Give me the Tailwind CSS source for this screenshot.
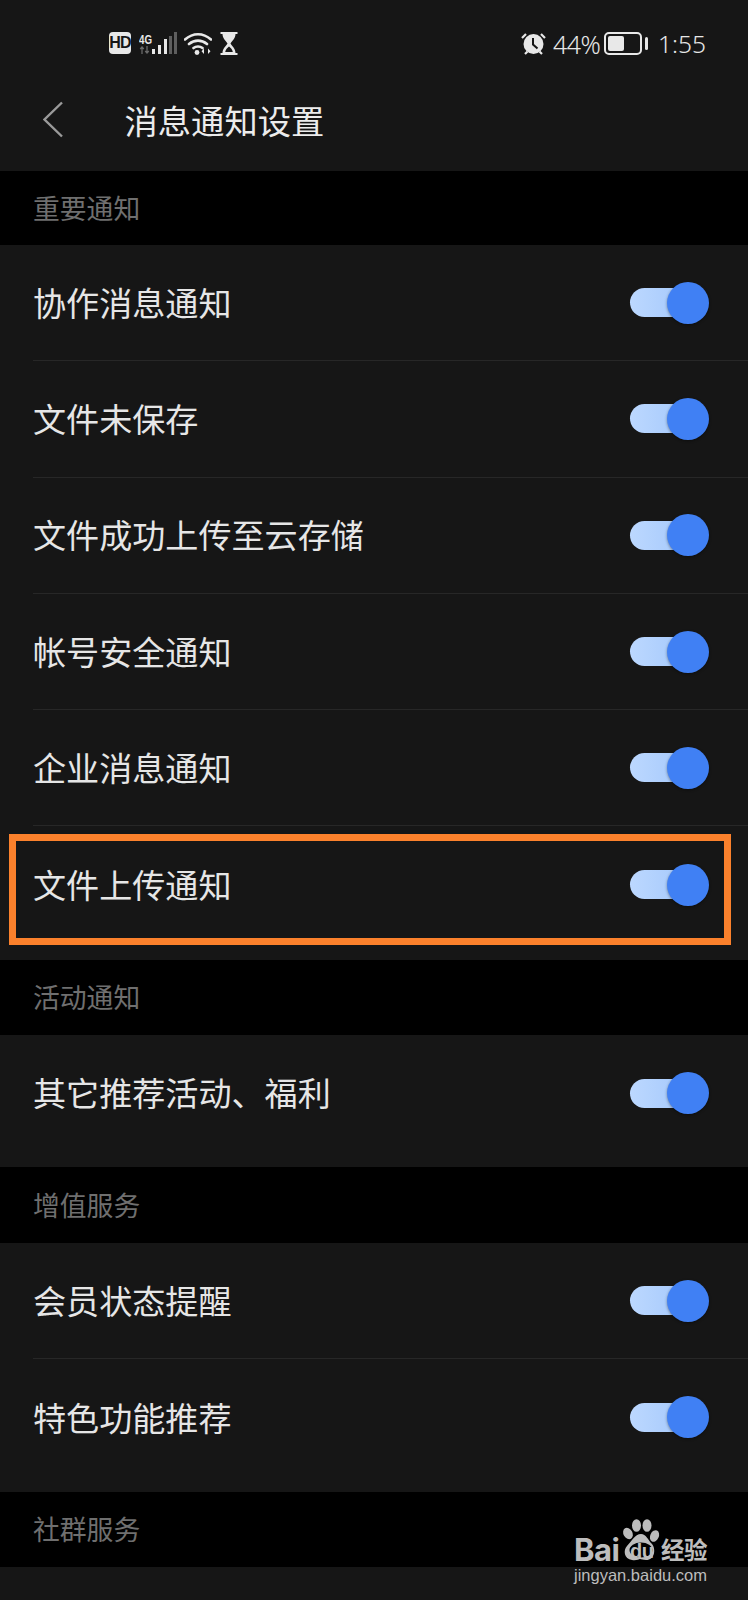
<!DOCTYPE html>
<html lang="zh-CN">
<head>
<meta charset="utf-8">
<title>消息通知设置</title>
<script src="https://cdn.jsdelivr.net/npm/@tailwindcss/browser@4"></script>
</head>
<body class="bg-black">
<div class="relative w-[748px] h-[1600px] overflow-hidden bg-black text-[#e6e6e6] font-['Noto_Sans_CJK_SC','Noto_Sans',sans-serif]">

  <!-- status bar -->
  <div class="h-[86px] bg-[#161616] flex items-start justify-between pt-[32px] pl-[109px] pr-[42px]">
    <div class="flex items-start">
      <div class="w-[22px] h-[22px] rounded-[4px] bg-[#e8e8e8] text-[#161616] flex items-center justify-center text-[16px] font-bold leading-none font-['Liberation_Sans',sans-serif] tracking-[-0.8px]">HD</div>
      <svg class="ml-[8px]" width="38" height="22" viewBox="0 0 38 22">
        <text x="0" y="11.500" font-family="Liberation Sans" font-weight="700" font-size="13.500" fill="#e8e8e8" textLength="13" lengthAdjust="spacingAndGlyphs">4G</text>
        <path d="M3 15v7M1.200 17l1.800-2 1.800 2M8 14v7M6.200 19l1.800 2 1.800-2" stroke="#6a6a6a" stroke-width="1.300" fill="none"/>
        <rect x="13" y="17" width="3" height="5" fill="#e8e8e8"/>
        <rect x="19" y="13" width="3" height="9" fill="#e8e8e8"/>
        <rect x="25" y="7" width="3" height="15" fill="#e8e8e8"/>
        <rect x="30" y="4" width="3" height="18" fill="#5e5e5e"/>
        <rect x="35" y="0" width="3" height="22" fill="#5e5e5e"/>
      </svg>
      <svg class="ml-[7px]" width="28" height="23" viewBox="0 0 28 23">
        <path d="M1 7.500C9 0.500 19 0.500 27 7.500M5 12C10.500 7.500 17.500 7.500 23 12M9.500 16C12 14 16 14 18.500 16" stroke="#e8e8e8" stroke-width="2.600" fill="none" stroke-linecap="round"/>
        <circle cx="13" cy="20.500" r="2.400" fill="#e8e8e8"/>
        <path d="M20 22v-5.500l-2.500 2.700zM24 16.500v5.500l2.500-2.700z" fill="#e8e8e8"/>
      </svg>
      <svg class="ml-[8px]" width="18" height="23" viewBox="0 0 18 23">
        <path d="M0.500 1h17M0.500 22h17" stroke="#e8e8e8" stroke-width="2"/>
        <path d="M2.500 2h13c0 4.500-3.500 7-5 9.500 1.500 2.500 5 5 5 9.500h-13c0-4.500 3.500-7 5-9.500C6 9 2.500 6.500 2.500 2z" fill="#e8e8e8"/>
        <path d="M9 14.500c-2 1.500-3.500 3.500-3.800 5.500h7.600C12.500 18 11 16 9 14.500z" fill="#161616"/>
      </svg>
    </div>
    <div class="flex items-start">
      <svg width="25" height="23" viewBox="0 0 25 23">
        <circle cx="12.500" cy="12" r="10" fill="#e8e8e8"/>
        <path d="M12 6v6.500l4.500 4" stroke="#161616" stroke-width="2" fill="none"/>
        <path d="M1 6l4-4M24 6l-4-4M4 22l2.500-2.500M21 22l-2.500-2.500" stroke="#e8e8e8" stroke-width="2.200"/>
      </svg>
      <span class="ml-[7px] w-[46px] text-[25px] leading-[24px] font-['Noto_Sans',sans-serif] font-light tracking-[-0.6px] whitespace-nowrap">44%</span>
      <div class="ml-[5px] w-[38px] h-[23px] rounded-[5px] border-2 border-[#e8e8e8] p-[2px]">
        <div class="w-[16px] h-full rounded-[2px] bg-[#e8e8e8]"></div>
      </div>
      <div class="ml-[3px] mt-[5px] w-[3px] h-[13px] rounded-full bg-[#e8e8e8]"></div>
      <span class="ml-[10px] text-[24.500px] leading-[24px] font-['Noto_Sans',sans-serif] font-light">1:55</span>
    </div>
  </div>

  <!-- navigation bar -->
  <div class="h-[85px] bg-[#161616] flex items-start pt-[15px] pl-[43px]">
    <svg width="20" height="37" viewBox="0 0 20 37">
      <path d="M19 1.500L1.500 18.500 19 35.500" stroke="#9a9a9a" stroke-width="2.400" fill="none"/>
    </svg>
    <h1 class="ml-[61.500px] text-[33.300px] leading-[38px] font-normal text-[#ececec]">消息通知设置</h1>
  </div>

  <!-- important notices -->
  <div class="h-[74px] flex items-center pl-[33px] text-[26.800px] text-[#6f6f6f] leading-none">重要通知</div>
  <div class="h-[715px] bg-[#161616]">
    <div class="relative h-[116.300px] ml-[33px] border-b border-[#272727] flex items-center justify-between pr-[39px] text-[33.100px]">
      <span>协作消息通知</span>
      <span class="relative w-[79px] h-[42px] block">
        <span class="absolute left-0 right-[20px] top-[6.500px] h-[29px] rounded-full bg-gradient-to-r from-[#bcd8ff] to-[#a4c8fb]"></span>
        <span class="absolute right-0 top-0 w-[42px] h-[42px] rounded-full bg-[#4080f4] shadow-[0_1px_3px_rgba(0,0,0,0.4)]"></span>
      </span>
    </div>
    <div class="relative h-[116.300px] ml-[33px] border-b border-[#272727] flex items-center justify-between pr-[39px] text-[33.100px]">
      <span>文件未保存</span>
      <span class="relative w-[79px] h-[42px] block">
        <span class="absolute left-0 right-[20px] top-[6.500px] h-[29px] rounded-full bg-gradient-to-r from-[#bcd8ff] to-[#a4c8fb]"></span>
        <span class="absolute right-0 top-0 w-[42px] h-[42px] rounded-full bg-[#4080f4] shadow-[0_1px_3px_rgba(0,0,0,0.4)]"></span>
      </span>
    </div>
    <div class="relative h-[116.300px] ml-[33px] border-b border-[#272727] flex items-center justify-between pr-[39px] text-[33.100px]">
      <span>文件成功上传至云存储</span>
      <span class="relative w-[79px] h-[42px] block">
        <span class="absolute left-0 right-[20px] top-[6.500px] h-[29px] rounded-full bg-gradient-to-r from-[#bcd8ff] to-[#a4c8fb]"></span>
        <span class="absolute right-0 top-0 w-[42px] h-[42px] rounded-full bg-[#4080f4] shadow-[0_1px_3px_rgba(0,0,0,0.4)]"></span>
      </span>
    </div>
    <div class="relative h-[116.300px] ml-[33px] border-b border-[#272727] flex items-center justify-between pr-[39px] text-[33.100px]">
      <span>帐号安全通知</span>
      <span class="relative w-[79px] h-[42px] block">
        <span class="absolute left-0 right-[20px] top-[6.500px] h-[29px] rounded-full bg-gradient-to-r from-[#bcd8ff] to-[#a4c8fb]"></span>
        <span class="absolute right-0 top-0 w-[42px] h-[42px] rounded-full bg-[#4080f4] shadow-[0_1px_3px_rgba(0,0,0,0.4)]"></span>
      </span>
    </div>
    <div class="relative h-[116.300px] ml-[33px] border-b border-[#272727] flex items-center justify-between pr-[39px] text-[33.100px]">
      <span>企业消息通知</span>
      <span class="relative w-[79px] h-[42px] block">
        <span class="absolute left-0 right-[20px] top-[6.500px] h-[29px] rounded-full bg-gradient-to-r from-[#bcd8ff] to-[#a4c8fb]"></span>
        <span class="absolute right-0 top-0 w-[42px] h-[42px] rounded-full bg-[#4080f4] shadow-[0_1px_3px_rgba(0,0,0,0.4)]"></span>
      </span>
    </div>
    <div class="relative h-[116.300px] ml-[33px] flex items-center justify-between pr-[39px] text-[33.100px]">
      <span>文件上传通知</span>
      <span class="relative w-[79px] h-[42px] block">
        <span class="absolute left-0 right-[20px] top-[6.500px] h-[29px] rounded-full bg-gradient-to-r from-[#bcd8ff] to-[#a4c8fb]"></span>
        <span class="absolute right-0 top-0 w-[42px] h-[42px] rounded-full bg-[#4080f4] shadow-[0_1px_3px_rgba(0,0,0,0.4)]"></span>
      </span>
      <!-- highlight frame around this row -->
      <div class="absolute left-[-24.500px] right-[17.500px] top-[8px] h-[111px] border-[7px] border-[#fb812c]"></div>
    </div>
  </div>

  <!-- activity notices -->
  <div class="h-[75px] flex items-center pl-[33px] text-[26.800px] text-[#6f6f6f] leading-none">活动通知</div>
  <div class="h-[132px] bg-[#161616]">
    <div class="h-[116.300px] ml-[33px] flex items-center justify-between pr-[39px] text-[33.100px]">
      <span>其它推荐活动、福利</span>
      <span class="relative w-[79px] h-[42px] block">
        <span class="absolute left-0 right-[20px] top-[6.500px] h-[29px] rounded-full bg-gradient-to-r from-[#bcd8ff] to-[#a4c8fb]"></span>
        <span class="absolute right-0 top-0 w-[42px] h-[42px] rounded-full bg-[#4080f4] shadow-[0_1px_3px_rgba(0,0,0,0.4)]"></span>
      </span>
    </div>
  </div>

  <!-- value-added services -->
  <div class="h-[76px] flex items-center pl-[33px] text-[26.800px] text-[#6f6f6f] leading-none">增值服务</div>
  <div class="h-[249px] bg-[#161616]">
    <div class="h-[116.300px] ml-[33px] border-b border-[#272727] flex items-center justify-between pr-[39px] text-[33.100px]">
      <span>会员状态提醒</span>
      <span class="relative w-[79px] h-[42px] block">
        <span class="absolute left-0 right-[20px] top-[6.500px] h-[29px] rounded-full bg-gradient-to-r from-[#bcd8ff] to-[#a4c8fb]"></span>
        <span class="absolute right-0 top-0 w-[42px] h-[42px] rounded-full bg-[#4080f4] shadow-[0_1px_3px_rgba(0,0,0,0.4)]"></span>
      </span>
    </div>
    <div class="h-[116.300px] ml-[33px] flex items-center justify-between pr-[39px] text-[33.100px]">
      <span>特色功能推荐</span>
      <span class="relative w-[79px] h-[42px] block">
        <span class="absolute left-0 right-[20px] top-[6.500px] h-[29px] rounded-full bg-gradient-to-r from-[#bcd8ff] to-[#a4c8fb]"></span>
        <span class="absolute right-0 top-0 w-[42px] h-[42px] rounded-full bg-[#4080f4] shadow-[0_1px_3px_rgba(0,0,0,0.4)]"></span>
      </span>
    </div>
  </div>

  <!-- community services -->
  <div class="h-[75px] flex items-center pl-[33px] text-[26.800px] text-[#6f6f6f] leading-none">社群服务</div>
  <div class="h-[33px] bg-[#161616]"></div>

  <!-- site mark in the lower corner -->
  <div class="absolute left-[574px] top-[1519px] w-[136px] text-[#bdbdbd]">
    <div class="relative h-[48px]">
      <span class="absolute left-0 top-[18px] text-[31px] leading-[26px] font-bold font-['Inter',sans-serif] tracking-[-0.5px]">Bai</span>
      <svg class="absolute left-[47px] top-0" width="40" height="44" viewBox="0 0 40 44">
        <ellipse cx="7" cy="14.500" rx="4.500" ry="6" fill="#bdbdbd" transform="rotate(-30 7 14.500)"/>
        <ellipse cx="15.500" cy="6.500" rx="4.500" ry="6.300" fill="#bdbdbd"/>
        <ellipse cx="26" cy="6.500" rx="4.500" ry="6.300" fill="#bdbdbd"/>
        <ellipse cx="33.500" cy="17" rx="4.300" ry="6" fill="#bdbdbd" transform="rotate(25 33.500 17)"/>
        <path d="M20 15c5 0 7 6 11 10 4 5 3 16-6 16-3 0-5-1-6-1s-4 2-8 1C3 40 2 31 6 27c4-4 8-12 14-12z" fill="#bdbdbd"/>
        <ellipse cx="20" cy="31" rx="11.500" ry="7.500" fill="#000"/>
      </svg>
      <span class="absolute left-[56px] top-[22px] text-[20px] leading-[20px] font-bold font-['Liberation_Sans',sans-serif] tracking-[-0.5px]">du</span>
      <span class="absolute left-[87px] top-[17px] text-[23.500px] leading-[26px] font-bold tracking-[-0.5px]">经验</span>
    </div>
    <div class="text-[16.500px] leading-[17px] font-['Liberation_Sans',sans-serif] whitespace-nowrap">jingyan.baidu.com</div>
  </div>
</div>
</body>
</html>
